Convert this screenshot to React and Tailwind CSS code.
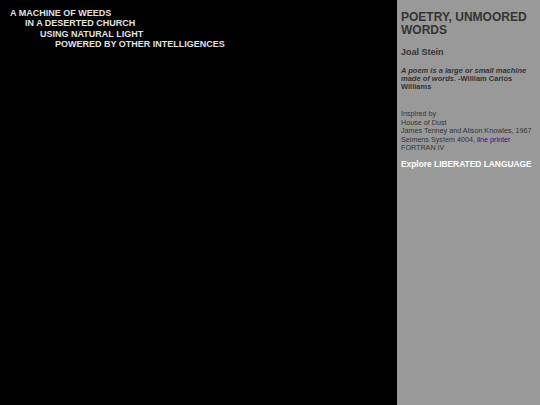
import React from 'react';

const LINES = [
  { text: 'A MACHINE OF WEEDS', indent: 'pl-[10px]' },
  { text: 'IN A DESERTED CHURCH', indent: 'pl-[25px]' },
  { text: 'USING NATURAL LIGHT', indent: 'pl-[40px]' },
  { text: 'POWERED BY OTHER INTELLIGENCES', indent: 'pl-[55px]' },
];

const App = () => {
  return (
    <div className="w-[540px] h-[405px] flex bg-black font-['Liberation_Sans',Arial,sans-serif] overflow-hidden">
      {/* poem canvas */}
      <div className="w-[397px] shrink-0 h-full pt-[7.5px]">
        {LINES.map((l) => (
          <div key={l.text} className={`${l.indent} text-[9px] leading-[10.5px] font-bold text-[#e2e2e2]`}>
            {l.text}
          </div>
        ))}
      </div>

      {/* sidebar */}
      <div className="flex-1 min-w-0 h-full bg-[#999999] pl-[4px] pr-[7px] pt-[11px] text-[#343434]">
        <h1 className="text-[12px] leading-[13px] font-bold">POETRY, UNMOORED WORDS</h1>
        <div className="mt-[10px] text-[9px] font-bold leading-[11px]">Joal Stein</div>
        <p className="mt-[9px] text-[7.5px] leading-[8px] font-bold">
          <em>A poem is a large or small machine made of words.</em> -William Carlos Williams
        </p>
        <div className="mt-[19px] text-[7.2px] leading-[8.5px]">
          <div>Inspired by</div>
          <div>House of Dust</div>
          <div>James Tenney and Alison Knowles, 1967</div>
          <div>
            Seimens System 4004, <span className="text-[#1c1c84]">line printer</span>
          </div>
          <div>FORTRAN IV</div>
        </div>
        <div className="mt-[6px] text-[8.4px] leading-[11px] font-bold text-white whitespace-nowrap">
          Explore LIBERATED LANGUAGE
        </div>
      </div>
    </div>
  );
};

export default App;
